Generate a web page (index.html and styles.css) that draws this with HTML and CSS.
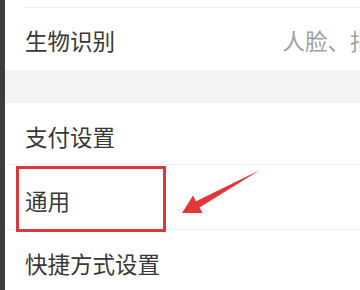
FILE: index.html
```html
<!DOCTYPE html>
<html lang="zh">
<head>
<meta charset="utf-8">
<link rel="stylesheet" href="styles.css">
</head>
<body>
<div class="edge"></div>
<div class="main">
  <div class="row top"></div>
  <div class="row bio">
    <span class="label">生物识别</span>
    <span class="value">人脸、指纹</span>
  </div>
  <div class="band"></div>
  <div class="row pay"><span class="label">支付设置</span></div>
  <div class="row general"><span class="label">通用</span></div>
  <div class="row shortcut"><span class="label">快捷方式设置</span></div>
</div>
<div class="highlight"></div>
<svg class="arrow" width="360" height="290" viewBox="0 0 360 290">
  <polygon points="260,170 199.5,207.4 202.6,213.1 182,213 193,195.5 196.1,201.2" fill="#e6353a"/>
</svg>
</body>
</html>
```
FILE: styles.css
```css
html, body {
  margin: 0;
  padding: 0;
  width: 360px;
  height: 290px;
  overflow: hidden;
  background: #ffffff;
}
body {
  display: flex;
  position: relative;
  font-family: "Noto Sans CJK SC", "Noto Sans", sans-serif;
}
.edge {
  width: 5px;
  flex: none;
  background: #3d3d3d;
}
.main {
  flex: 1;
  display: flex;
  flex-direction: column;
  min-width: 0;
}
.row {
  display: flex;
  align-items: center;
  padding-left: 20px;
  white-space: nowrap;
  overflow: hidden;
  box-sizing: border-box;
}
.label {
  font-size: 22.5px;
  color: #383838;
  line-height: 1;
}
.value {
  margin-left: auto;
  margin-right: -35px;
  font-size: 22.5px;
  color: #a0a0a0;
  line-height: 1;
}
.top {
  height: 8px;
  margin-left: 20px;
  padding: 0;
  border-bottom: 1px solid #efefef;
}
.bio {
  height: 62px;
  padding-top: 2px;
}
.band {
  height: 33px;
  background: #f3f3f3;
}
.pay {
  height: 62px;
  padding-top: 6px;
  border-bottom: 1px solid #f0f0f0;
}
.general {
  height: 65px;
  padding-top: 7px;
  border-bottom: 1px solid #f0f0f0;
}
.shortcut {
  height: 60px;
  padding-top: 7px;
}
.highlight {
  position: absolute;
  left: 16px;
  top: 166px;
  width: 150px;
  height: 66px;
  box-sizing: border-box;
  border: 3px solid #d8393c;
}
.arrow {
  position: absolute;
  left: 0;
  top: 0;
}
```
